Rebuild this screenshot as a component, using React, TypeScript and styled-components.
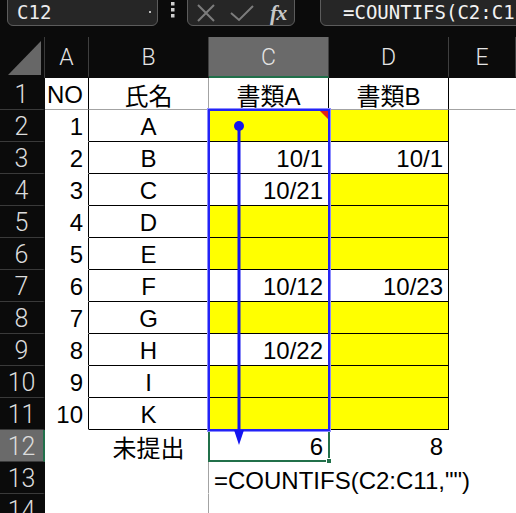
import styled, { createGlobalStyle } from "styled-components";

const GlobalStyle = createGlobalStyle`
  html, body {
    margin: 0;
    padding: 0;
    background: #ffffff;
    overflow: hidden;
  }
  * {
    box-sizing: border-box;
  }
`;

type Line = "black" | "gray" | undefined;

const lineColor = (l: Line) =>
  l === "black" ? "#000000" : l === "gray" ? "#a3a3a3" : "transparent";

const rows = [
  { no: "1", name: "A", a: "", b: "" },
  { no: "2", name: "B", a: "10/1", b: "10/1" },
  { no: "3", name: "C", a: "10/21", b: "" },
  { no: "4", name: "D", a: "", b: "" },
  { no: "5", name: "E", a: "", b: "" },
  { no: "6", name: "F", a: "10/12", b: "10/23" },
  { no: "7", name: "G", a: "", b: "" },
  { no: "8", name: "H", a: "10/22", b: "" },
  { no: "9", name: "I", a: "", b: "" },
  { no: "10", name: "K", a: "", b: "" },
];

const Page = styled.div`
  width: 516px;
  height: 513px;
  overflow: hidden;
  background: #0b0b0b;
`;

const Toolbar = styled.div`
  height: 37px;
  display: flex;
  align-items: flex-start;
  background: #0b0b0b;
`;

const Box = styled.div<{ $w?: number }>`
  margin-top: -6px;
  height: 32px;
  width: ${({ $w }) => ($w ? `${$w}px` : "auto")};
  flex: ${({ $w }) => ($w ? "none" : "1")};
  background: #262626;
  border: 1px solid #5c5c5c;
  border-radius: 6px;
  display: flex;
  align-items: center;
  overflow: hidden;
  white-space: nowrap;
  position: relative;
`;

const NameBox = styled(Box)`
  margin-left: 7px;
  padding: 4px 0 0 9px;
  font-family: "DejaVu Sans Mono", "Liberation Mono", monospace;
  font-size: 19px;
  font-weight: 300;
  color: #ececec;
  justify-content: space-between;
`;

const DropDot = styled.span`
  width: 2px;
  height: 2px;
  margin-right: 6px;
  background: #bdbdbd;
`;

const Kebab = styled.svg`
  margin: 2px 12px 0 13px;
  flex: none;
`;

const FxBox = styled(Box)`
  padding: 5px 0 0 8px;
  gap: 14px;
`;

const FxText = styled.span`
  font-family: "Liberation Serif", serif;
  font-style: italic;
  font-weight: bold;
  font-size: 22px;
  color: #c8c8c8;
  margin-left: 2px;
  letter-spacing: -1px;
`;

const FormulaBox = styled(Box)`
  margin-left: 25px;
  margin-right: -20px;
  padding: 4px 0 0 22px;
  font-family: "DejaVu Sans Mono", "Liberation Mono", monospace;
  font-size: 19px;
  color: #f2f2f2;
`;

const Sheet = styled.div`
  display: grid;
  grid-template-columns: 45px 44px 120px 120px 120px 1fr;
  grid-template-rows: 41px repeat(14, 32px);
  background: #ffffff;
`;

const Corner = styled.div`
  background: #0b0b0b;
  border-right: 1px solid #3a3a3a;
  padding: 4px 3px 3px 8px;
  display: flex;
`;

const CornerTriangle = styled.div`
  flex: 1;
  background: #676767;
  clip-path: polygon(100% 0, 100% 100%, 0 100%);
`;

const ColHead = styled.div<{ $active?: boolean }>`
  background: ${({ $active }) => ($active ? "#6a6a6a" : "#0b0b0b")};
  border-right: 1px solid #3f3f3f;
  border-bottom: 2px solid ${({ $active }) => ($active ? "#21704a" : "#0b0b0b")};
  display: flex;
  align-items: center;
  justify-content: center;
  padding-top: 2px;
  font-family: Roboto, "Noto Sans", sans-serif;
  font-weight: 300;
  font-size: 23px;
  color: #e4e4e4;
`;

const RowHead = styled.div<{ $active?: boolean }>`
  background: ${({ $active }) => ($active ? "#6a6a6a" : "#0b0b0b")};
  border-bottom: 1px solid #3a3a3a;
  border-right: 2px solid ${({ $active }) => ($active ? "#21704a" : "#0b0b0b")};
  display: flex;
  align-items: center;
  justify-content: center;
  padding-top: 1px;
  font-family: Roboto, "Noto Sans", sans-serif;
  font-weight: 300;
  font-size: 25px;
  color: #dcdcdc;
  grid-column: 1;
`;

const Cell = styled.div<{
  $align?: "left" | "center" | "right";
  $fill?: boolean;
  $right?: Line;
  $bottom?: Line;
  $col: number;
  $row: number;
}>`
  grid-column: ${({ $col }) => $col};
  grid-row: ${({ $row }) => $row};
  background: ${({ $fill }) => ($fill ? "#ffff00" : "#ffffff")};
  border-right: 1px solid ${({ $right }) => lineColor($right)};
  border-bottom: 1px solid ${({ $bottom }) => lineColor($bottom)};
  display: flex;
  align-items: center;
  justify-content: ${({ $align }) =>
    $align === "right" ? "flex-end" : $align === "center" ? "center" : "flex-start"};
  padding: 2px 5px 0 5px;
  font-family: "Liberation Sans", "Noto Sans CJK JP", sans-serif;
  font-size: 24px;
  color: #000000;
  white-space: nowrap;
  overflow: visible;
`;

const FormulaNote = styled(Cell)`
  padding-top: 6px;
  z-index: 1;
`;

const CommentMark = styled.div`
  grid-column: 4;
  grid-row: 3;
  justify-self: end;
  width: 8px;
  height: 8px;
  margin: 1px 1px 0 0;
  background: #e2231a;
  clip-path: polygon(0 0, 100% 0, 100% 100%);
  z-index: 2;
`;

const RangeBox = styled.div`
  grid-column: 4;
  grid-row: 3 / span 10;
  margin: -1px;
  border: 2px solid #2424f5;
  box-shadow: 0 0 0 1px #8c8cff;
  z-index: 3;
  pointer-events: none;
`;

const Selection = styled.div`
  grid-column: 4;
  grid-row: 13;
  margin: 0 -1px;
  border: 2px solid #21704a;
  border-top: none;
  position: relative;
  z-index: 2;
`;

const FillHandle = styled.span`
  position: absolute;
  right: -4px;
  bottom: -4px;
  width: 6px;
  height: 6px;
  background: #21704a;
  border: 1px solid #ffffff;
`;

const ArrowLayer = styled.svg`
  grid-column: 4;
  grid-row: 3 / span 11;
  z-index: 4;
  pointer-events: none;
`;

const App = () => {
  const cols = ["A", "B", "C", "D", "E"];
  return (
    <Page>
      <GlobalStyle />
      <Toolbar>
        <NameBox $w={151}>
          C12
          <DropDot />
        </NameBox>
        <Kebab width="4" height="16" viewBox="0 0 4 16">
          <rect x="0" y="0" width="3.5" height="3.5" fill="#cfcfcf" />
          <rect x="0" y="6" width="3.5" height="3.5" fill="#cfcfcf" />
          <rect x="0" y="12" width="3.5" height="3.5" fill="#cfcfcf" />
        </Kebab>
        <FxBox $w={108}>
          <svg width="20" height="18" viewBox="0 0 20 18">
            <path d="M2 1 L18 17 M18 1 L2 17" stroke="#7c7c7c" strokeWidth="2" fill="none" />
          </svg>
          <svg width="24" height="18" viewBox="0 0 24 18">
            <path d="M1 9 L9 16 L23 2" stroke="#7c7c7c" strokeWidth="2" fill="none" />
          </svg>
          <FxText>fx</FxText>
        </FxBox>
        <FormulaBox>=COUNTIFS(C2:C11,"")</FormulaBox>
      </Toolbar>

      <Sheet>
        <Corner>
          <CornerTriangle />
        </Corner>
        {cols.map((c) => (
          <ColHead key={c} $active={c === "C"}>
            {c}
          </ColHead>
        ))}

        {Array.from({ length: 14 }, (_, i) => (
          <RowHead key={i} $active={i === 11} style={{ gridRow: i + 2 }}>
            {i + 1}
          </RowHead>
        ))}

        {/* header row */}
        <Cell $col={2} $row={2} $align="right" $right="black" $bottom="gray">NO</Cell>
        <Cell $col={3} $row={2} $align="center" $right="gray" $bottom="gray">氏名</Cell>
        <Cell $col={4} $row={2} $align="center" $right="black" $bottom="gray">書類A</Cell>
        <Cell $col={5} $row={2} $align="center" $right="black" $bottom="gray">書類B</Cell>
        <Cell $col={6} $row={2} $bottom="gray" />

        {rows.flatMap((r, i) => [
          <Cell key={`a${i}`} $col={2} $row={i + 3} $align="right" $right="black">
            {r.no}
          </Cell>,
          <Cell key={`b${i}`} $col={3} $row={i + 3} $align="center" $right="black" $bottom="black">
            {r.name}
          </Cell>,
          <Cell key={`c${i}`} $col={4} $row={i + 3} $align="right" $right="black" $bottom="black" $fill={!r.a}>
            {r.a}
          </Cell>,
          <Cell key={`d${i}`} $col={5} $row={i + 3} $align="right" $right="black" $bottom="black" $fill={!r.b}>
            {r.b}
          </Cell>,
          <Cell key={`e${i}`} $col={6} $row={i + 3} />,
        ])}

        {/* totals */}
        <Cell $col={2} $row={13} />
        <Cell $col={3} $row={13} $align="center">未提出</Cell>
        <Cell $col={4} $row={13} $align="right">6</Cell>
        <Cell $col={5} $row={13} $align="right">8</Cell>
        <Cell $col={6} $row={13} />

        <Cell $col={2} $row={14} />
        <Cell $col={3} $row={14} $right="gray" />
        <Cell $col={5} $row={14} />
        <Cell $col={6} $row={14} />
        <FormulaNote $col={4} $row={14}>=COUNTIFS(C2:C11,"")</FormulaNote>

        <Cell $col={2} $row={15} />
        <Cell $col={3} $row={15} $right="gray" />
        <Cell $col={4} $row={15} />
        <Cell $col={5} $row={15} />
        <Cell $col={6} $row={15} />

        <CommentMark />
        <RangeBox />
        <Selection>
          <FillHandle />
        </Selection>
        <ArrowLayer width="120" height="352" viewBox="0 0 120 352">
          <circle cx="30" cy="16" r="5" fill="#1414f0" />
          <line x1="30" y1="16" x2="30" y2="322" stroke="#1414f0" strokeWidth="3" />
          <polygon points="25,320 35,320 30,335" fill="#1414f0" />
        </ArrowLayer>
      </Sheet>
    </Page>
  );
};

export default App;
